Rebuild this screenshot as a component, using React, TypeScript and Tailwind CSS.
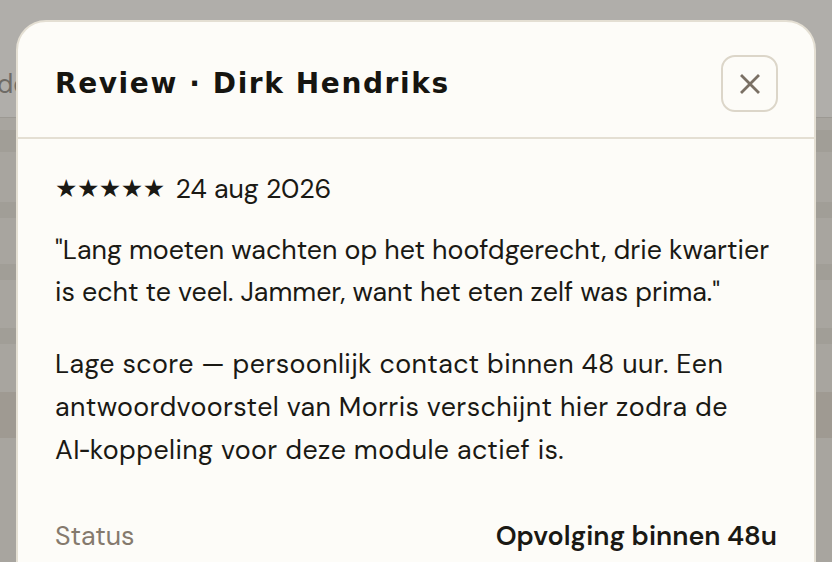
import React from 'react';

const rows = [
  { h: 'h-[12px]', tone: 'bg-[#a8a59f]' },
  { h: 'h-[22px]', tone: 'bg-[#a19e97]' },
  { h: 'h-[50px]', tone: 'bg-[#a8a59f]' },
  { h: 'h-[16px]', tone: 'bg-[#a19e97]' },
  { h: 'h-[46px]', tone: 'bg-[#a8a59f]' },
  { h: 'h-[16px]', tone: 'bg-[#a19e97]' },
  { h: 'h-[48px]', tone: 'bg-[#a8a59f]' },
  { h: 'h-[16px]', tone: 'bg-[#a19e97]' },
  { h: 'h-[48px]', tone: 'bg-[#a8a59f]' },
  { h: 'h-[46px]', tone: 'bg-[#9f9a92]' },
  { h: 'h-[110px]', tone: 'bg-[#a8a59f]' },
];

const CloseIcon = () => (
  <svg width="22" height="22" viewBox="0 0 22 22" fill="none">
    <path d="M3 3L19 19M19 3L3 19" stroke="#7a7064" strokeWidth="2.8" strokeLinecap="square" />
  </svg>
);

const App: React.FC = () => {
  return (
    <div className="relative h-[562px] w-[832px] overflow-hidden bg-[#a8a59f]" style={{ fontFamily: '"DM Sans", Inter, "Noto Sans", sans-serif' }}>
      {/* page behind the overlay */}
      <div className="flex flex-col">
        <div className="h-[118px] bg-[#b0aeaa] border-b border-[#9c9993] flex items-end pb-[18px]">
          <span className="text-[26px] leading-[30px] text-[#6e6b66] -ml-[3px]">de</span>
        </div>
        {rows.map((r, i) => (
          <div key={i} className={`${r.h} ${r.tone}`} />
        ))}
      </div>

      {/* modal */}
      <div className="absolute inset-0 flex justify-center pt-[20px]">
        <div className="w-[800px] h-[600px] rounded-[30px] border-2 border-[#e4dfd3] bg-[#fdfcf8] flex flex-col">
          <div className="flex items-center justify-between pl-[37px] pr-[36px] pt-[33px] pb-[25px] border-b-2 border-[#e4dfd3]">
            <h2 className="text-[28px] font-bold tracking-[1.6px] text-[#161510]" style={{ fontFamily: '"DejaVu Sans", Verdana, sans-serif' }}>
              Review · Dirk Hendriks
            </h2>
            <button className="w-[57px] h-[57px] rounded-[14px] border-2 border-[#dcd6c9] flex items-center justify-center">
              <CloseIcon />
            </button>
          </div>

          <div className="flex flex-col px-[37px] pt-[29px] text-[26.8px] leading-[42px] text-[#1a1914]">
            <p className="flex items-center">
              <span className="text-[25px] tracking-[-0.5px] mr-[11px]" style={{ fontFamily: '"DejaVu Sans", sans-serif' }}>★★★★★</span>
              <span>24 aug 2026</span>
            </p>
            <p className="mt-[19px]">
              "Lang moeten wachten op het hoofdgerecht, drie kwartier is echt te veel. Jammer, want het eten zelf was prima."
            </p>
            <p className="mt-[29px] leading-[43px] tracking-[0.4px]">
              Lage score — persoonlijk contact binnen 48 uur. Een antwoordvoorstel van Morris verschijnt hier zodra de AI&#8209;koppeling voor deze module actief is.
            </p>
            <div className="mt-[44px] flex items-center justify-between">
              <span className="text-[#857a6d]">Status</span>
              <span className="font-semibold">Opvolging binnen 48u</span>
            </div>
          </div>
        </div>
      </div>
    </div>
  );
};

export default App;
